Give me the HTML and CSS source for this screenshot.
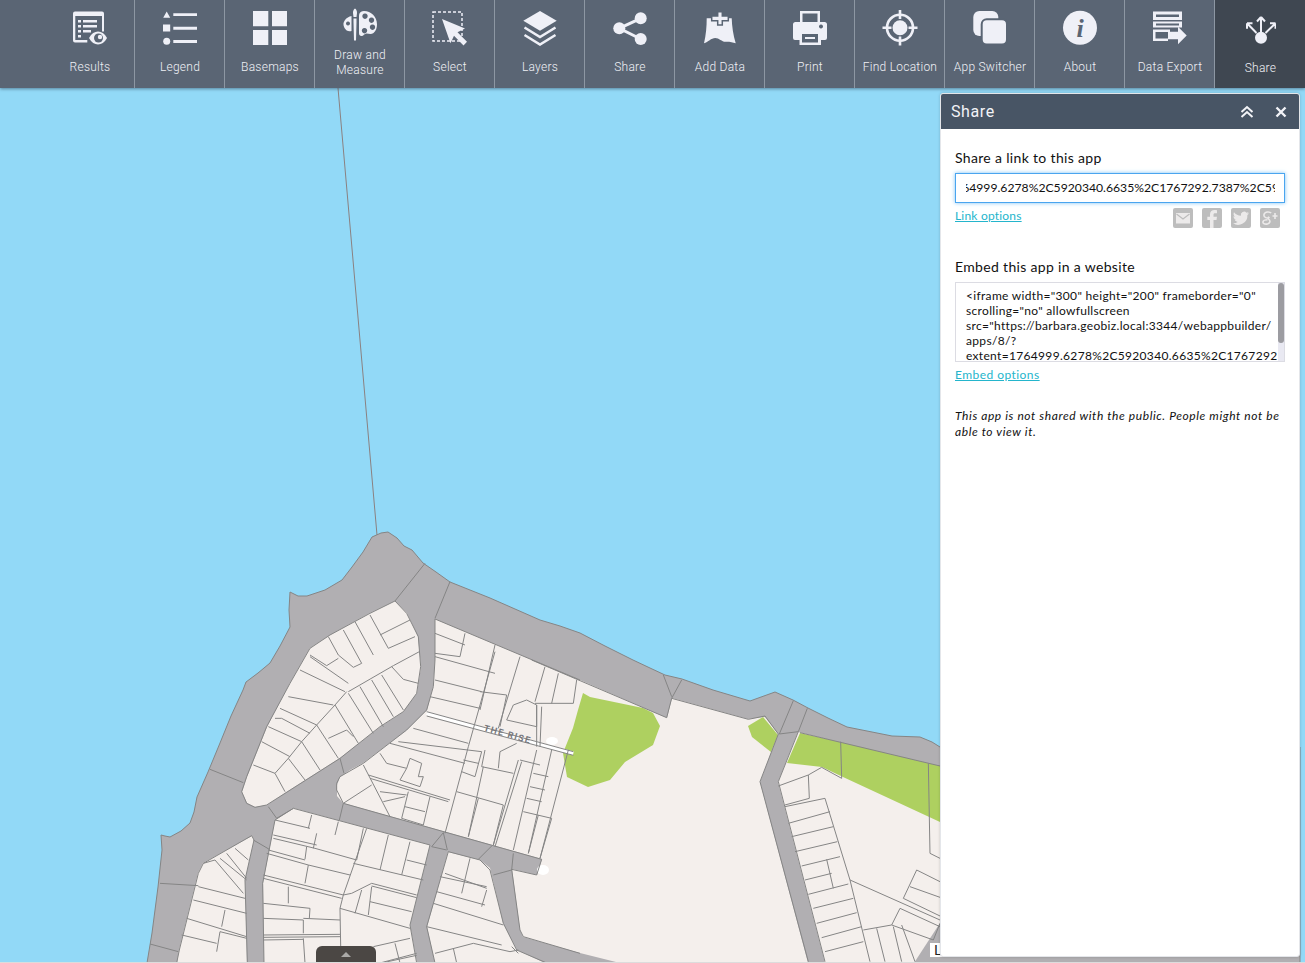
FILE: index.html
```html
<!DOCTYPE html>
<html lang="en">
<head>
<meta charset="utf-8">
<title>Share</title>
<link rel="stylesheet" href="styles.css">
</head>
<body>
<header class="toolbar">
  <div class="tool"><svg class="ico" viewBox="0 0 36 36"><path class="f" fill-rule="evenodd" d="M3 1.500h27a2 2 0 0 1 2 2v18h-2V6H3.300v24h12v2.500H3a2 2 0 0 1-2-2v-27a2 2 0 0 1 2-2z"/><path class="f" d="M6 10h3v2.500H6zM11 10h14v2.500H11zM6 15h3v2.500H6zM11 15h14v2.500H11zM6 20h3v2.500H6zM11 20h8v2.500h-8zM6 25h3v2.500H6z"/><path class="f" d="M17 28c2.500-4.500 5.500-6.500 9-6.500s6.500 2 9 6.500c-2.500 4.500-5.500 6.500-9 6.500s-6.500-2-9-6.500z"/><circle class="d" cx="26.500" cy="28" r="4.500"/><circle class="f" cx="28" cy="27" r="2.200"/></svg><span class="label">Results</span></div>
  <div class="tool"><svg class="ico" viewBox="0 0 36 36"><path class="f" d="M4.700 1.500l3.500 6.200H1.200zM11.300 3.300H35V6H11.300zM1 14.500h7.200v7H1zM11.300 16.700H35v3H11.300zM11.300 30H35v3H11.300z"/><circle class="f" cx="4.700" cy="31.300" r="3.500"/></svg><span class="label">Legend</span></div>
  <div class="tool"><svg class="ico" viewBox="0 0 36 36"><path class="f" d="M1 1h15.300v15.300H1zM20 1h15v15.300H20zM1 20h15.300v15H1zM20 20h15v15H20z"/></svg><span class="label">Basemaps</span></div>
  <div class="tool two"><svg class="ico" viewBox="0 0 36 36"><path class="f" fill-rule="evenodd" d="M22 4c7 0 13 5.500 13 13.500 0 3-1 6.500-3.500 8.500-2.500 2-5 .5-7 .5-2.500 0-3 3-5.500 2.500-1.500-.5-2-1.500-2-3V10.500C17 8 17 4 22 4zM23 6.500a2.700 2.700 0 1 0 .01 0zM29.500 10.500a2.700 2.700 0 1 0 .01 0zM30.500 17.500a2.700 2.700 0 1 0 .01 0zM22.500 21a2.700 2.700 0 1 0 .01 0z"/><path class="f" d="M13 1.500c1.500 1 2 2.500 2 4.500l-.5 4h-3l-.5-4c0-2 .5-3.500 2-4.500zM11.500 11.500h3v4l-.5 18h-2l-.5-18zM9.500 9v15c-3 1-5.500-.5-7-3-1.500-3-1.500-5.500.5-8 1.500-2 4-3.500 6.500-4zM6 14.500a2 2 0 1 0 .01 0z" fill-rule="evenodd"/></svg><span class="label">Draw and<br>Measure</span></div>
  <div class="tool"><svg class="ico" viewBox="0 0 36 36"><rect class="dash" x="1" y="2" width="29" height="29"/><path class="f" d="M10 9l23 9.500-7.500 3.700 9.500 9.500-3.500 3.800-9.500-9.800-3.500 7.500z"/></svg><span class="label">Select</span></div>
  <div class="tool"><svg class="ico" viewBox="0 0 36 36"><path class="f" d="M18 1l16.700 9.700L18 20.700 1.300 10.700z"/><path class="s" d="M2.500 17.500L18 27l15.500-9.500M2.500 25L18 34.500 33.500 25"/></svg><span class="label">Layers</span></div>
  <div class="tool"><svg class="ico" viewBox="0 0 36 36"><path class="s thick" d="M28.700 8.300L7.300 18.300l21.400 10.700"/><circle class="f" cx="28.700" cy="8.300" r="6"/><circle class="f" cx="7.300" cy="18.300" r="6"/><circle class="f" cx="28.700" cy="29" r="6"/></svg><span class="label">Share</span></div>
  <div class="tool"><svg class="ico" viewBox="0 0 36 36"><path class="f" d="M4.700 8.300h25c.3 8 1.500 17 4 25-3-1-7-1.800-10-1.500-3.500.300-6.500-3.800-10.500-3.800-4 0-7 4-11.200 5.300 2-8 2.700-17 2.700-25z"/><path class="f outline" d="M15.700 1.700h4.600V6h6v4.700h-6V15h-4.600v-4.300h-6V6h6z"/></svg><span class="label">Add Data</span></div>
  <div class="tool"><svg class="ico" viewBox="0 0 36 36"><path class="f" fill-rule="evenodd" d="M8 1h20v11h-2.500V3.500h-15V12H8z"/><path class="f" fill-rule="evenodd" d="M3.500 12h29a2.500 2.500 0 0 1 2.500 2.500V28a2 2 0 0 1-2 2h-4v5H7.500v-5H3a2 2 0 0 1-2-2V14.500A2.500 2.500 0 0 1 3.500 12zM29 14.500a2 2 0 1 0 .01 0zM10 24v8.500h16V24zM13 27h10v2H13z"/></svg><span class="label">Print</span></div>
  <div class="tool"><svg class="ico" viewBox="0 0 36 36"><circle class="s" cx="18" cy="17.700" r="13"/><path class="f" d="M16.700 0h2.600v9h-2.600zM16.700 26.500h2.600V35.500h-2.600zM.5 16.400h9v2.600h-9zM26.500 16.400h9v2.600h-9z"/><circle class="f" cx="18" cy="17.700" r="7.500"/></svg><span class="label">Find Location</span></div>
  <div class="tool"><svg class="ico" viewBox="0 0 36 36"><rect class="f" x="1.300" y="1" width="25" height="25" rx="6"/><rect class="f gap" x="9.700" y="9.300" width="25.300" height="25.300" rx="5"/></svg><span class="label">App Switcher</span></div>
  <div class="tool"><svg class="ico" viewBox="0 0 36 36"><circle class="f" cx="18" cy="17.700" r="17"/><text class="info" x="18" y="27" text-anchor="middle">i</text></svg><span class="label">About</span></div>
  <div class="tool"><svg class="ico" viewBox="0 0 36 36"><path class="f" d="M1 1.500h29v8.500H1zM1 11.500h29v6H1zM1 19.500h17V22H3.500v6.500H16V31H1z"/><path class="d" d="M4 4.500h23v2.500H4zM4 13.500h23v2H4z"/><path class="f" d="M16 21.700h10v-5l8.700 8.800-8.700 8.800v-5H16z"/></svg><span class="label">Data Export</span></div>
  <div class="tool active"><svg class="ico" viewBox="0 0 30 30"><circle class="f" cx="15" cy="21.700" r="6"/><path class="s thin" d="M15 16V1M15 1l-4 4.500M15 1l4 4.500M10.500 17L1 7.300M1 7.300v5.500M1 7.300h5.500M19.500 17L29.500 7.300M29.500 7.300v5.500M29.500 7.300h-5.500"/></svg><span class="label">Share</span></div>
</header>

<main class="map">
  <svg class="geo" viewBox="0 0 1305 875" preserveAspectRatio="none">
    <g transform="translate(0 -88)">
      <path class="pipe" d="M338 88L377 535"/>
      <path class="road edge" d="M147 963L152 933L158 887L162 850L161 835L165 836L170 837L181 831L190 823L194 812L197 797L208 772L220 743L231 716L243 690L246 682L258 673L270 663L280 646L290 627L289 610L290 592L298 596L307 596L325 590L342 580L352 567L363 552L372 537L381 533L388 532L397 538L404 546L412 550L423 563L436 572L450 582L470 590L490 598L515 609L540 620L560 626L580 633L605 646L633 660L650 668L665 675L682 679L713 690L750 701L775 692L793 700L808 708L828 718L847 727L892 736L920 737L932 742L940 747L1300 747L1300 963Z"/>
      <path class="land" d="M395 601L407 613L418 637L421 667L417 693L403 712L380 727L340 758L285 793L267 805L255 807L247 803L242 792L247 777L267 727L290 683L310 648L330 635L370 613Z"/>
      <path class="land" d="M435 619L580 680L667 718L672 698L748 719L765 717L778 734L760 782L808 963L620 963L580 953L523 937L520 930L512 869L537 875L542 859L343 803L337 796L337 785L340 777L350 770L363 763L407 730L427 710L433 687L435 660Z"/>
      <path class="land" d="M293 808L430 845L410 925L417 963L264 963L263 883L275 820Z"/>
      <path class="land" d="M252 836L254 840L245 880L247 963L177 963L179 950L198 873L203 863Z"/>
      <path class="land" d="M448 852L480 860L490 868L493 880L503 923L517 950L545 963L435 963L427 927Z"/>
      <path class="land" d="M798 732L940 767L940 945L925 963L825 963L778 782Z"/>
      <path class="green" d="M583 693L590 697L643 708L653 713L660 726L653 745L625 762L610 780L588 787L567 777L563 753L573 728L578 710Z"/>
      <path class="green" d="M763 717L748 726L752 737L771 752L778 735Z"/>
      <path class="green" d="M800 733L840 742L940 766L940 822L843 777L822 767L787 763Z"/>
      <ellipse class="blob" cx="543" cy="870" rx="6" ry="5"/>
      <ellipse class="blob" cx="552" cy="741" rx="6" ry="4"/>
      <path class="road" d="M940 923L940 963L914 963Z"/>

      <g transform="translate(140 520) scale(.33333)">
        <path class="rise" d="M860 580L1300 700"/>
        <path class="lines" d="M765 243L800 280L835 350L842 440L830 520L790 575L720 620L600 715L435 820L380 855L345 862L320 850L305 815L320 770L380 620L450 490L510 385L570 345L690 280Z"/>
        <path class="lines" d="M885 297L1320 480M885 297V420L880 500L860 570L800 630L670 730L600 770L590 790L590 810L610 850L1205 1018L1190 1065L1115 1048L1140 1230L1150 1250L1320 1300"/>
        <path class="lines" d="M460 865L870 975L810 1215L830 1329M372 1329L368 1090L405 900L460 865M335 947L342 960L315 1080L322 1329M110 1329L118 1290L175 1060L190 1030L335 947M925 995L1020 1020L1050 1050L1060 1090L1090 1210L1130 1290L1220 1329M885 1329L860 1220L925 995"/>
        <path class="lines" d="M855 130L765 243M930 185L885 295M210 748L310 788M410 895L385 860M410 895L460 865M600 715L612 760M610 850L598 900M60 1090L175 1097M30 1272L115 1295M340 960L388 988M875 980L920 990M910 938L875 980M910 938L922 990M1055 978L1015 1018M1060 1065L1115 1050M1120 1000L1115 1050"/>
        <path class="lines" d="M690 285L745 385M645 305L700 405M610 330L665 430M720 345L810 300M745 385L825 350M565 350L595 405M510 405L560 437L595 415M595 405L640 442L665 430M625 515L760 437L838 395M620 515L585 555L530 615L485 665L445 715L405 760L435 815M510 410L625 490M480 450L615 515M445 530L580 555M420 565L530 615M405 595L425 595L510 640M385 620L485 665M365 665L450 710M340 735L405 760M625 520L700 640M660 500L730 620M695 480L760 590M725 465L790 570M755 440L790 478L835 490M585 555L655 670M530 615L595 715M485 665L540 750M445 715L495 780M565 655L620 630L640 650"/>
        <path class="lines" d="M885 340L975 375M975 340L960 410L885 400M885 410L1065 460M885 480L1025 515M870 530L1020 565M1065 375L1020 570M1065 395L985 680L915 940M1140 410L1075 625M1215 440L1185 545M1255 460L1235 550M1310 480L1300 550M1020 515L1100 525L1080 620M1100 600L1190 620M1100 600L1120 555L1160 540L1190 555L1190 620M1185 550L1300 550M1190 555V680M1205 560L1200 680M860 575L1300 695M860 588L1300 706"/>
        <path class="lines" d="M820 625L985 670M775 665L1025 695M750 670L975 730M1025 695L1005 770M970 720L1015 730M965 755L1005 770M1035 690L1025 740L1120 760M720 700L740 730L800 745L810 715L845 730L835 770L850 770L840 800L780 780L800 745M685 765L930 840M690 775L925 845M670 735L750 890M610 850L695 795M720 815L800 825M730 845L795 830M795 860L855 875M805 815L785 895L850 915M870 830L850 915M950 815L1090 855M1030 740L985 950M1015 835L985 950M1135 720L1060 975M1145 725L1065 980M1090 855L1060 975M1190 690L1120 990M1235 690L1165 1000M1285 690L1200 1015M1140 720L1200 735M1180 760L1225 770M1170 800L1215 810M1160 835L1205 845M1150 875L1235 895L1200 1015M1195 885L1165 1000M1080 695L1130 670M1080 695L1075 745"/>
        <path class="lines" d="M405 900L510 925M515 885L505 925M595 905L585 945M670 925L650 1020M400 945L530 975M400 955L525 985M530 940L520 985M525 985L650 1020M385 990L495 1020M500 980L495 1018M380 1000L505 1035M505 1035L495 1090M505 1035L630 1065M370 1065L610 1125M370 1075L605 1135M680 925L610 1125M745 945L720 1050M810 965L785 1065M800 1020L860 1035M640 1030L850 1080M695 1090L830 1125M695 1098L830 1133M695 1090L635 1120L610 1125M665 1110L645 1180M695 1100L685 1185M690 1145L815 1175M600 1165L810 1225M600 1165L610 1125M445 1100V1150M370 1150L510 1165L508 1195M370 1195L490 1200V1240M490 1195L600 1200M370 1245L600 1243M370 1252L600 1250M600 1165L603 1329M490 1255L495 1329M370 1260L490 1258M700 1280L810 1255M765 1270L780 1329M720 1329L830 1300M725 1329L830 1306"/>
        <path class="lines" d="M225 1020L310 1120M240 1015L320 1080M260 1000L320 1075M285 985L325 1020M175 1100L315 1135M160 1140L320 1180M255 1170L245 1220M140 1195L320 1250M125 1245L230 1270M240 1235L230 1295M240 1235L320 1255M225 1020L190 1030"/>
        <path class="lines" d="M915 1060L1040 1105M990 1015L965 1120M900 1070L1040 1100M890 1115L1035 1155M1040 1110L1025 1160M880 1150L1090 1215M860 1220L1085 1275M1000 1270L1110 1295L1135 1290M940 1285L950 1329M885 1300L1000 1270M1115 1280L1135 1300"/>
        <text class="street" transform="translate(1030 632) rotate(15.500)">THE RISE</text>
      </g>

      <g transform="translate(500 660) scale(.33333)">
        <path class="lines" d="M95 0L500 173L515 115L745 178L795 168L835 222L780 365L925 905M490 45L515 110M545 60L515 115M880 122L838 222M922 145L895 215M838 222L895 215L835 365L975 905M900 218L1320 318"/>
        <path class="lines" d="M835 378L925 345L965 322L1025 355M1025 355L1022 245M925 345L928 415L855 435M855 440L975 415M975 415L1050 660L1110 905M865 490L990 455M875 530L1000 500M885 575L1012 545M905 618L1020 590M915 660L995 640M980 598L1000 685M925 703L1045 672M940 745L1060 715M950 790L1070 758M965 833L1085 800M975 875L1090 845M1090 810L1175 795L1200 745M1200 745L1320 800M1050 660L1320 780M1130 805L1155 905M1180 800L1205 905M1205 795L1245 905M1175 795L1300 840M1210 715L1250 630L1320 665M1230 680L1320 712M1210 715L1320 768M1285 310L1290 580L1320 595M1320 790L1300 840"/>
      </g>
    </g>
  </svg>
  <div class="nav-handle"><span class="nav-tri"></span></div>
  <div class="attrib">L</div>
  <div class="bottom-line"></div>

  <aside class="panel">
    <div class="panel-head">
      <span class="panel-title">Share</span>
      <svg class="head-ico" viewBox="0 0 14 14"><path d="M1.500 7L7 2l5.500 5M1.500 12L7 7l5.500 5"/></svg>
      <svg class="head-ico close" viewBox="0 0 14 14"><path d="M2.500 2.500l9 9M11.500 2.500l-9 9"/></svg>
    </div>
    <div class="panel-body">
      <h3 class="heading">Share a link to this app</h3>
      <div class="url"><div class="url-text">1764999.6278%2C5920340.6635%2C1767292.7387%2C5921234.1</div></div>
      <div class="link-row">
        <a class="link">Link options</a>
        <div class="socials">
          <span class="soc"><svg viewBox="0 0 20 20"><path class="soc-f" d="M3 5h14v10.500H3z"/><path class="soc-s" d="M3.500 6L10 11l6.500-5"/></svg></span>
          <span class="soc"><svg viewBox="0 0 20 20"><path class="soc-f" d="M11.500 20v-8h3l.5-3.300h-3.500V6.800c0-1 .3-1.600 1.700-1.600H15V2.200c-.3 0-1.300-.2-2.500-.2C10 2 8 3.500 8 6.300v2.400H5.300V12H8v8z"/></svg></span>
          <span class="soc"><svg viewBox="0 0 20 20"><path class="soc-f" d="M18 5.200c-.6.300-1.200.5-1.900.5.700-.4 1.200-1 1.400-1.800-.6.400-1.300.6-2 .8A3.300 3.300 0 0 0 9.900 7.700 9.300 9.300 0 0 1 3 4.200c-.9 1.500-.4 3.400 1 4.400-.5 0-1-.2-1.500-.4 0 1.600 1.100 3 2.600 3.300-.5.100-1 .2-1.500.1.400 1.300 1.600 2.200 3 2.300A6.600 6.600 0 0 1 2 15.300 9.300 9.300 0 0 0 16.400 7c.7-.4 1.200-1.100 1.600-1.800z"/></svg></span>
          <span class="soc"><svg viewBox="0 0 20 20"><path class="soc-s wide" d="M11 5.200C10 3.500 5 3.200 4 6.500c-.7 3 3.500 4.500 5.500 2.500M9 9c-1.500.8-1 1.500 0 2.500 1.500 1.500 1.200 3.800-1.500 4.500-2.500.5-5-.3-4.500-2.300.4-1.700 3-2 4.500-2M15 5v6M12.500 8h5"/></svg></span>
        </div>
      </div>
      <h3 class="heading second">Embed this app in a website</h3>
      <div class="embed">
        <div class="embed-text">&lt;iframe width="300" height="200" frameborder="0"<br>scrolling="no" allowfullscreen<br>src="https://barbara.geobiz.local:3344/webappbuilder/<br>apps/8/?<br>extent=1764999.6278%2C5920340.6635%2C1767292</div>
        <div class="scroll"><div class="thumb"></div></div>
      </div>
      <a class="link embed-link">Embed options</a>
      <p class="note">This app is not shared with the public. People might not be able to view it.</p>
    </div>
  </aside>
</main>
</body>
</html>
```
FILE: styles.css
```css
* { box-sizing: border-box; }
html, body { margin: 0; height: 100%; overflow: hidden; }
body { display: flex; flex-direction: column; width: 1305px; height: 963px; font-family: Lato, sans-serif; background: #92d9f7; }

.toolbar { display: flex; height: 88px; padding-left: 45px; background: #5a6574; flex: none; position: relative; z-index: 2; box-shadow: 0 1px 3px rgba(40,60,80,.55); }
.tool { width: 90px; border-right: 1px solid #8d97a3; display: flex; flex-direction: column; align-items: center; padding: 10px 0 0 1px; color: #f0f1f6; flex: none; }
.tool.two { padding-top: 7px; }
.tool.active { background: #3f4751; border-right: 0; padding-top: 16px; }
.ico { width: 36px; height: 36px; flex: none; display: block; }
.tool.active .ico { width: 30px; height: 30px; }
.label { font: 300 12px/15px Roboto, sans-serif; letter-spacing: .25px; text-align: center; margin-top: 14px; white-space: nowrap; }
.tool.two .label { margin-top: 5px; }
.tool.active .label { margin-top: 15px; }

.f { fill: #eff0f7; }
.d { fill: #5a6574; }
.s { fill: none; stroke: #eff0f7; stroke-width: 2.600; }
.s.thick { stroke-width: 3; }
.s.thin { stroke-width: 2; }
.gap { stroke: #5a6574; stroke-width: 2; }
.outline { stroke: #5a6574; stroke-width: 1.500; }
.dash { fill: none; stroke: #eff0f7; stroke-width: 1.500; stroke-dasharray: 3 2; }
.info { font: italic bold 26px "Liberation Serif", serif; fill: #5a6574; }

.map { position: relative; flex: 1; overflow: hidden; background: #92d9f7; }
.geo { position: absolute; left: 0; top: 0; width: 1305px; height: 875px; }
.road { fill: #b1afb2; }
.edge { stroke: #858585; stroke-width: 1; }
.land { fill: #f4efec; }
.green { fill: #aed060; }
.blob { fill: #fff; }
.pipe { fill: none; stroke: #8b8080; stroke-width: 1; }
.lines { fill: none; stroke: #858585; stroke-width: 3; }
.rise { fill: none; stroke: #fff; stroke-width: 12; }
.street { font: bold 27px Roboto, sans-serif; letter-spacing: 4px; fill: #77787c; }

.nav-handle { position: absolute; left: 316px; top: 858px; width: 60px; height: 20px; background: #4b4744; border-radius: 6px 6px 0 0; display: flex; justify-content: center; padding-top: 6px; }
.nav-tri { width: 0; height: 0; border: 5px solid transparent; border-top: 0; border-bottom: 5px solid #aaa9a7; }
.attrib { position: absolute; left: 930px; top: 855px; width: 12px; height: 14px; background: #fff; font: 14px/14px Lato, sans-serif; padding-left: 4px; color: #222; }
.bottom-line { position: absolute; left: 0; right: 0; bottom: 0; height: 1px; background: #dcdcdc; }

.panel { position: absolute; left: 940px; top: 5px; width: 360px; height: 864px; background: #fff; border: 1px solid #e4e6ea; border-radius: 3px; box-shadow: 0 0 3px rgba(0,0,0,.18); overflow: hidden; display: flex; flex-direction: column; }
.panel-head { height: 35px; background: #485565; display: flex; align-items: center; padding: 0 11px 0 10px; flex: none; }
.panel-title { font: 400 16px/20px Roboto, sans-serif; letter-spacing: .6px; color: #f2f3f7; flex: 1; }
.head-ico { width: 14px; height: 14px; fill: none; stroke: #f2f3f7; stroke-width: 2; }
.head-ico.close { margin-left: 20px; stroke-width: 2.400; }

.panel-body { padding: 20px 14px 0; color: #111; }
.heading { margin: 0; font: 400 14px/18px Lato, sans-serif; letter-spacing: .33px; }
.heading.second { margin-top: 30px; }
.url { margin-top: 6px; width: 330px; height: 30px; border: 1px solid #4aa5ef; box-shadow: 0 0 4px #7cc3f5; padding: 0 9px 0 10px; }
.url-text { font: 12.200px/28px Lato, sans-serif; white-space: nowrap; overflow: hidden; text-indent: -18px; }
.link-row { display: flex; justify-content: space-between; margin-top: 4px; width: 330px; }
.link { font: 12px/18px Lato, sans-serif; letter-spacing: .2px; color: #24b5cc; text-decoration: underline; }
.socials { display: flex; gap: 9px; margin-top: 1px; padding-right: 5px; }
.soc { width: 20px; height: 20px; background: #bdbdbd; border-radius: 2px; display: block; }
.soc svg { display: block; width: 20px; height: 20px; }
.soc-f { fill: #eceaea; }
.soc-s { fill: none; stroke: #bdbdbd; stroke-width: 1.200; }
.soc-s.wide { stroke: #eceaea; stroke-width: 1.600; }
.embed { position: relative; margin-top: 6px; width: 330px; height: 80px; border: 1px solid #dcdce3; overflow: hidden; }
.embed-text { font: 12px/15px Lato, sans-serif; letter-spacing: .32px; padding: 5px 0 0 10px; white-space: nowrap; }
.scroll { position: absolute; right: 0; top: 0; bottom: 0; width: 6px; background: #e9e9f2; }
.thumb { height: 60px; background: #9c9ca1; border-radius: 3px; }
.embed-link { display: block; margin-top: 4px; letter-spacing: .45px; }
.note { margin: 24px 0 0; font: italic 12px/16px Lato, sans-serif; letter-spacing: .6px; }
```
